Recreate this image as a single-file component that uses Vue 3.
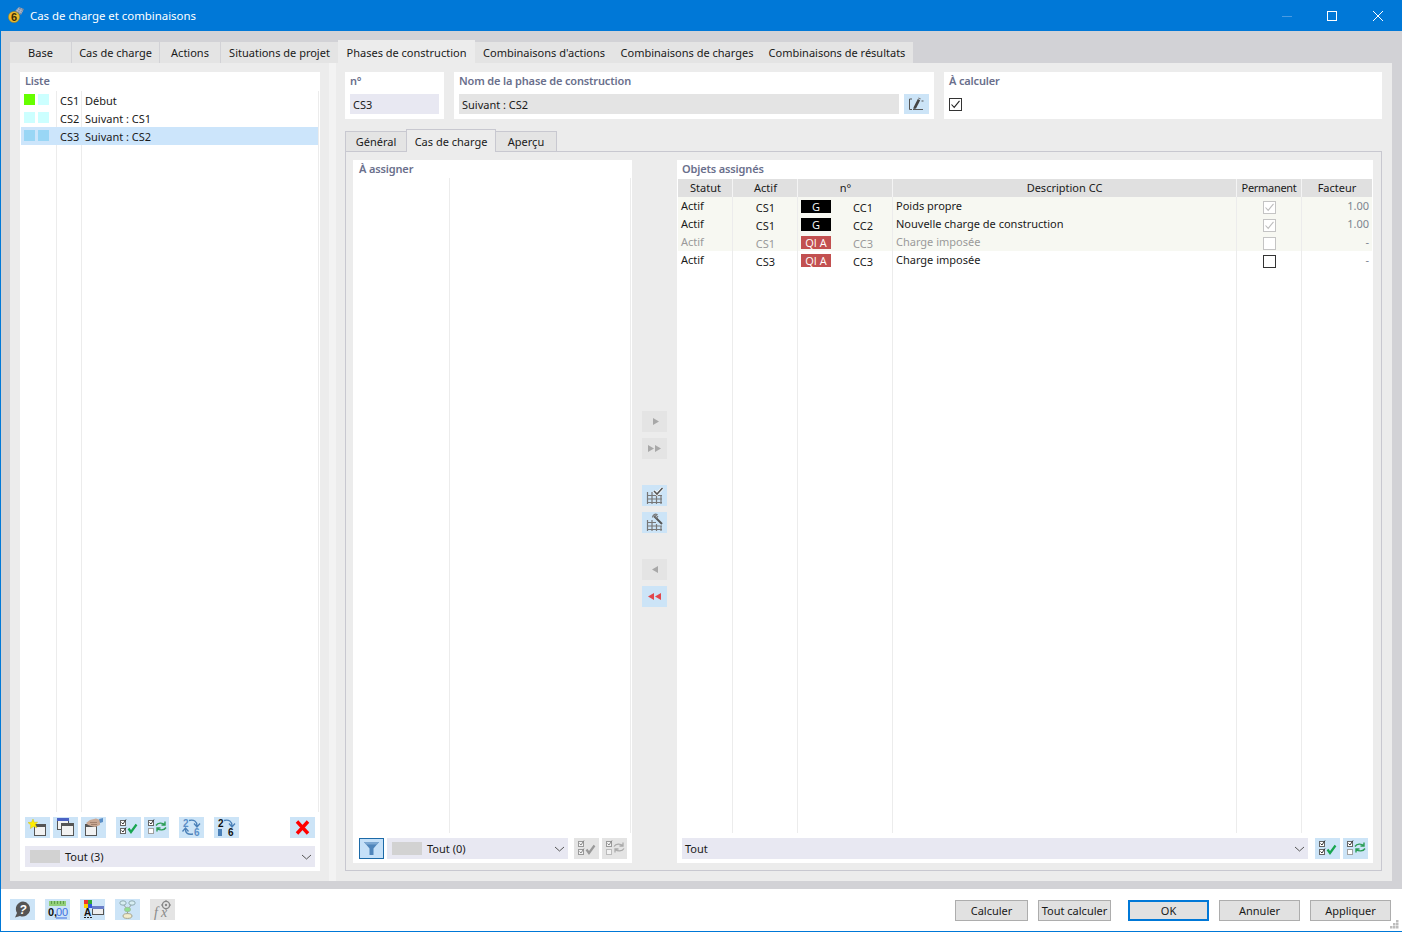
<script setup>
const mainTabs = [
  { label: 'Base', w: 61, gap: 1 },
  { label: 'Cas de charge', w: 87, gap: 1 },
  { label: 'Actions', w: 60, gap: 1 },
  { label: 'Situations de projet', w: 117, gap: 0 },
  { label: 'Phases de construction', w: 137, gap: 0, active: true },
  { label: "Combinaisons d'actions", w: 138, gap: 0 },
  { label: 'Combinaisons de charges', w: 148, gap: 0 },
  { label: 'Combinaisons de résultats', w: 152, gap: 0 }
]
const phases = [
  { no: 'CS1', name: 'Début', a: '#66ff00', b: '#ccffff' },
  { no: 'CS2', name: 'Suivant : CS1', a: '#ccffff', b: '#ccffff' },
  { no: 'CS3', name: 'Suivant : CS2', a: '#99d6f5', b: '#99d6f5', selected: true }
]
const rows = [
  { status: 'Actif', cs: 'CS1', badge: 'G', kind: 'g', cc: 'CC1', desc: 'Poids propre', checked: true, locked: true, factor: '1.00', tint: true },
  { status: 'Actif', cs: 'CS1', badge: 'G', kind: 'g', cc: 'CC2', desc: 'Nouvelle charge de construction', checked: true, locked: true, factor: '1.00', tint: true },
  { status: 'Actif', cs: 'CS1', badge: 'QI A', kind: 'q', cc: 'CC3', desc: 'Charge imposée', locked: true, factor: '-', tint: true, dim: true },
  { status: 'Actif', cs: 'CS3', badge: 'QI A', kind: 'q', cc: 'CC3', desc: 'Charge imposée', factor: '-' }
]
</script>

<template>
  <div class="window">
    <header class="titlebar">
      <svg class="app-icon" width="16" height="18" viewBox="0 0 16 18">
        <path d="M7 5 L11 1 L16 3 L13 9 Z" fill="#7d8aa0"/>
        <path d="M8 4L14 7M9.5 2.8L15 5.4M11 1.5L9 6M13.5 2.4L11.5 7.5" stroke="#c3cbd8" stroke-width="0.6"/>
        <circle cx="6" cy="11" r="5.6" fill="#eab92c" stroke="#9a7a18" stroke-width="0.5"/>
        <text x="6" y="15" text-anchor="middle" font-size="11" font-weight="700" font-family="Liberation Sans" fill="#3a2c05">6</text>
      </svg>
      <span class="title-text">Cas de charge et combinaisons</span>
      <div class="win-controls">
        <svg width="12" height="12" viewBox="0 0 12 12" class="wc-min"><path d="M1 6.5H11" stroke="#4a9be2"/></svg>
        <svg width="12" height="12" viewBox="0 0 12 12" class="wc-max"><rect x="1.5" y="1.5" width="9" height="9" fill="none" stroke="#fff"/></svg>
        <svg width="12" height="12" viewBox="0 0 12 12" class="wc-close"><path d="M1 1L11 11M11 1L1 11" stroke="#fff"/></svg>
      </div>
    </header>

    <main class="main">
      <nav class="tabs">
        <div
          v-for="t in mainTabs"
          :key="t.label"
          class="tab"
          :class="{ active: t.active }"
          :style="{ width: t.w + 'px', marginRight: t.gap + 'px' }"
        >{{ t.label }}</div>
      </nav>

      <div class="panel">
        <section class="left-pane">
          <div class="card list-card">
            <div class="group-label list-label">Liste</div>
            <div class="list">
              <div v-for="p in phases" :key="p.no" class="list-row" :class="{ selected: p.selected }">
                <div class="swatches">
                  <i class="swatch" :style="{ background: p.a }"></i>
                  <i class="swatch" :style="{ background: p.b }"></i>
                </div>
                <div class="l-no">{{ p.no }}</div>
                <div class="l-name">{{ p.name }}</div>
              </div>
            </div>
            <div class="list-tools">
              <button class="ib">
                <svg width="25" height="21" viewBox="0 0 25 21">
                  <rect x="9.5" y="7.5" width="11" height="11" fill="#f2f2f2" stroke="#555"/><rect x="9" y="7" width="12" height="3" fill="#555"/>
                  <path d="M8 2L9.3 5.4 12.6 5 10.4 7.6 12 10.8 8.4 9.6 5.4 11.6 5.8 8 3 5.6 6.6 5.2Z" fill="#ffee00" stroke="#c9b400" stroke-width="0.4"/>
                </svg>
              </button>
              <button class="ib">
                <svg width="25" height="21" viewBox="0 0 25 21">
                  <rect x="4.5" y="1.5" width="11" height="11" fill="#f2f2f2" stroke="#555"/><rect x="4" y="1" width="12" height="3" fill="#4a62c4"/>
                  <rect x="8.5" y="6.5" width="12" height="12" fill="#f2f2f2" stroke="#555"/><rect x="8" y="6" width="13" height="3" fill="#555"/>
                </svg>
              </button>
              <button class="ib">
                <svg width="25" height="21" viewBox="0 0 25 21">
                  <rect x="4.5" y="7.5" width="11" height="11" fill="#f2f2f2" stroke="#555"/><rect x="4" y="7" width="12" height="3" fill="#555"/>
                  <path d="M5 6L9 3 15 1.5 19 3 19 8 14 10 10 9 7 8Z" fill="#c9a893"/>
                  <path d="M18 2L22 1 22 5 19 6Z" fill="#5b8fc7"/>
                  <path d="M9 5.5H16M10 7.5H16" stroke="#8f6f5c" stroke-width="0.7"/>
                </svg>
              </button>
              <button class="ib ml-10">
                <svg width="25" height="21" viewBox="0 0 25 21">
                  <rect x="4.5" y="3.5" width="5" height="5" fill="#fff" stroke="#666"/><path d="M5.5 5.5L7 7 10 2.5" fill="none" stroke="#333"/>
                  <rect x="4.5" y="11.5" width="5" height="5" fill="#fff" stroke="#666"/><path d="M5.5 13.5L7 15 10 10.5" fill="none" stroke="#333"/>
                  <path d="M12.5 11.5L15 15 20.5 7.5" fill="none" stroke="#17a650" stroke-width="2.2"/>
                </svg>
              </button>
              <button class="ib">
                <svg width="25" height="21" viewBox="0 0 25 21">
                  <rect x="4.5" y="3.5" width="5" height="5" fill="#fff" stroke="#666"/><path d="M5.5 5.5L7 7 10 2.5" fill="none" stroke="#333"/>
                  <rect x="4.5" y="11.5" width="5" height="5" fill="#fff" stroke="#a0a0a0"/>
                  <path d="M12 8.5C14 5.5 18 5.5 21 7.5M21 4.5V8H17.5" fill="none" stroke="#2a9d55" stroke-width="1.4"/>
                  <path d="M22 10.5C20 13.5 16 13.5 13 11.5M13 14.5V11H16.5" fill="none" stroke="#2a9d55" stroke-width="1.4"/>
                </svg>
              </button>
              <button class="ib ml-10">
                <svg width="25" height="21" viewBox="0 0 25 21">
                  <text x="4" y="10" class="num-blue">2</text><text x="15" y="19" class="num-blue">6</text>
                  <path d="M10 3.5C15 2.5 18 4 18 9M15 6.5L18 10 21 6.5" fill="none" stroke="#4a80b8" stroke-width="1.3"/>
                  <path d="M14 17C9 18 6 16 6.5 12M3.5 14.5L6.5 11 9.5 14.5" fill="none" stroke="#4a80b8" stroke-width="1.3"/>
                </svg>
              </button>
              <button class="ib ml-10">
                <svg width="25" height="21" viewBox="0 0 25 21">
                  <text x="4" y="10" class="num-black">2</text><text x="14" y="19" class="num-black">6</text>
                  <rect x="4" y="12" width="4" height="7" fill="#4a80b8"/>
                  <path d="M10 3.5C15 2.5 18 4 18 9M15 6.5L18 10 21 6.5" fill="none" stroke="#4a80b8" stroke-width="1.3"/>
                </svg>
              </button>
              <button class="ib push-right">
                <svg width="25" height="21" viewBox="0 0 25 21"><path d="M7 4.5L18 16.5M18 4.5L7 16.5" stroke="#f00" stroke-width="3.4"/></svg>
              </button>
            </div>
            <div class="combo list-combo">
              <i class="combo-swatch"></i><span>Tout (3)</span>
              <svg class="chev" width="11" height="6" viewBox="0 0 11 6"><path d="M1 1L5.5 5 10 1" fill="none" stroke="#555"/></svg>
            </div>
          </div>
        </section>

        <div class="splitter"></div>

        <section class="right-pane">
          <div class="head-row">
            <div class="card head-card no-card">
              <div class="group-label">n°</div>
              <div class="field field-blue">CS3</div>
            </div>
            <div class="card head-card name-card">
              <div class="group-label">Nom de la phase de construction</div>
              <div class="name-line">
                <div class="field field-grey">Suivant : CS2</div>
                <button class="ib ib-edit">
                  <svg width="25" height="20" viewBox="0 0 25 20">
                    <path d="M8 5H5.5V15.5H8M9 15.5H19" fill="none" stroke="#555"/>
                    <path d="M9.5 13.5L13.8 5 16.2 6.2 12 14.6 9.5 15Z" fill="#444"/>
                    <path d="M14.4 3.4L16.8 4.6 16.4 5.4 14 4.2Z" fill="#777"/>
                    <path d="M17.5 7H19.5" stroke="#555"/>
                  </svg>
                </button>
              </div>
            </div>
            <div class="card head-card calc-card">
              <div class="group-label">À calculer</div>
              <span class="check check-dark checked-icon">
                <svg width="11" height="11" viewBox="0 0 11 11"><path d="M1.5 5.5L4.2 8.4 9.5 1.8" fill="none" stroke="#222" stroke-width="1.1"/></svg>
              </span>
            </div>
          </div>

          <div class="subtabs">
            <div class="subtab st-general">Général</div>
            <div class="subtab active st-load">Cas de charge</div>
            <div class="subtab st-preview">Aperçu</div>
          </div>

          <div class="subpanel">
            <div class="card assign-card">
              <div class="group-label assign-label">À assigner</div>
              <div class="assign-list"></div>
              <div class="assign-tools">
                <button class="ib ib-filter">
                  <svg width="23" height="19" viewBox="0 0 23 19"><path d="M4 3H19L13.5 9.5V16H9.5V9.5Z" fill="#4f85bb"/><path d="M4 3H19L17 5.4H6Z" fill="#7ba7d2"/></svg>
                </button>
                <div class="combo assign-combo">
                  <i class="combo-swatch"></i><span>Tout (0)</span>
                  <svg class="chev" width="11" height="6" viewBox="0 0 11 6"><path d="M1 1L5.5 5 10 1" fill="none" stroke="#555"/></svg>
                </div>
                <button class="ib ib-off ml-6">
                  <svg width="25" height="21" viewBox="0 0 25 21">
                    <rect x="4.5" y="3.5" width="5" height="5" fill="#f2f2f2" stroke="#999"/><path d="M5.5 5.5L7 7 10 2.5" fill="none" stroke="#888"/>
                    <rect x="4.5" y="11.5" width="5" height="5" fill="#f2f2f2" stroke="#999"/><path d="M5.5 13.5L7 15 10 10.5" fill="none" stroke="#888"/>
                    <path d="M12.5 11.5L15 15 20.5 7.5" fill="none" stroke="#999" stroke-width="2.2"/>
                  </svg>
                </button>
                <button class="ib ib-off">
                  <svg width="25" height="21" viewBox="0 0 25 21">
                    <rect x="4.5" y="3.5" width="5" height="5" fill="#f2f2f2" stroke="#999"/><path d="M5.5 5.5L7 7 10 2.5" fill="none" stroke="#888"/>
                    <rect x="4.5" y="11.5" width="5" height="5" fill="#f2f2f2" stroke="#bbb"/>
                    <path d="M12 8.5C14 5.5 18 5.5 21 7.5M21 4.5V8H17.5" fill="none" stroke="#aaa" stroke-width="1.3"/>
                    <path d="M22 10.5C20 13.5 16 13.5 13 11.5M13 14.5V11H16.5" fill="none" stroke="#aaa" stroke-width="1.3"/>
                  </svg>
                </button>
              </div>
            </div>

            <div class="transfer">
              <button class="ib ib-off">
                <svg width="25" height="21" viewBox="0 0 25 21"><path d="M11 7L17 10.5 11 14Z" fill="#a8a8a8"/></svg>
              </button>
              <button class="ib ib-off">
                <svg width="25" height="21" viewBox="0 0 25 21"><path d="M6 7L12 10.5 6 14ZM13 7L19 10.5 13 14Z" fill="#a8a8a8"/></svg>
              </button>
              <button class="ib group-gap">
                <svg width="25" height="21" viewBox="0 0 25 21">
                  <path d="M5.5 7V19M10 7V19M14.5 10V19M19 10V19M5 10.5H20M5 14H20M5 17.5H20" fill="none" stroke="#777" stroke-width="1.2"/>
                  <path d="M12 6L15 9 20.5 3" fill="none" stroke="#fff" stroke-width="3"/>
                  <path d="M12 6L15 9 20.5 3" fill="none" stroke="#555" stroke-width="1.6"/>
                </svg>
              </button>
              <button class="ib">
                <svg width="25" height="21" viewBox="0 0 25 21">
                  <path d="M5.5 8V19M10 8V19M14.5 12V19M19 14V19M5 10.5H14M5 14H20M5 17.5H20" fill="none" stroke="#777" stroke-width="1.2"/>
                  <path d="M12 4L20 12" fill="none" stroke="#555" stroke-width="2"/><path d="M10.5 5.5C10.5 3 13 1.5 15 2.5L13 4.5 14.5 6 16 4" fill="none" stroke="#777" stroke-width="1.2"/>
                </svg>
              </button>
              <button class="ib ib-off group-gap">
                <svg width="25" height="21" viewBox="0 0 25 21"><path d="M16 7L10 10.5 16 14Z" fill="#a8a8a8"/></svg>
              </button>
              <button class="ib">
                <svg width="25" height="21" viewBox="0 0 25 21"><path d="M12 7L6 10.5 12 14ZM19 7L13 10.5 19 14Z" fill="#e2474d"/></svg>
              </button>
            </div>

            <div class="card objects-card">
              <div class="group-label objects-label">Objets assignés</div>
              <div class="table">
                <div class="t-row t-head">
                  <div>Statut</div><div>Actif</div><div>n°</div><div>Description CC</div><div class="h-perm">Permanent</div><div>Facteur</div>
                </div>
                <div
                  v-for="(r, i) in rows"
                  :key="i"
                  class="t-row t-body"
                  :class="{ tint: r.tint, dim: r.dim }"
                >
                  <div class="c-status">{{ r.status }}</div>
                  <div class="c-cs">{{ r.cs }}</div>
                  <div class="c-no">
                    <span class="badge" :class="r.kind">{{ r.badge }}</span>
                    <span class="cc">{{ r.cc }}</span>
                  </div>
                  <div class="c-desc">{{ r.desc }}</div>
                  <div class="c-perm">
                    <span class="check" :class="r.locked ? 'check-grey' : 'check-dark'">
                      <svg v-if="r.checked" width="11" height="11" viewBox="0 0 11 11"><path d="M1.5 5.5L4.2 8.4 9.5 1.8" fill="none" stroke="#bdbdbd" stroke-width="1.1"/></svg>
                    </span>
                  </div>
                  <div class="c-factor">{{ r.factor }}</div>
                </div>
              </div>
              <div class="objects-tools">
                <div class="combo objects-combo">
                  <span>Tout</span>
                  <svg class="chev" width="11" height="6" viewBox="0 0 11 6"><path d="M1 1L5.5 5 10 1" fill="none" stroke="#555"/></svg>
                </div>
                <button class="ib ml-7">
                  <svg width="25" height="21" viewBox="0 0 25 21">
                    <rect x="4.5" y="3.5" width="5" height="5" fill="#fff" stroke="#666"/><path d="M5.5 5.5L7 7 10 2.5" fill="none" stroke="#333"/>
                    <rect x="4.5" y="11.5" width="5" height="5" fill="#fff" stroke="#666"/><path d="M5.5 13.5L7 15 10 10.5" fill="none" stroke="#333"/>
                    <path d="M12.5 11.5L15 15 20.5 7.5" fill="none" stroke="#17a650" stroke-width="2.2"/>
                  </svg>
                </button>
                <button class="ib">
                  <svg width="25" height="21" viewBox="0 0 25 21">
                    <rect x="4.5" y="3.5" width="5" height="5" fill="#fff" stroke="#666"/><path d="M5.5 5.5L7 7 10 2.5" fill="none" stroke="#333"/>
                    <rect x="4.5" y="11.5" width="5" height="5" fill="#fff" stroke="#a0a0a0"/>
                    <path d="M12 8.5C14 5.5 18 5.5 21 7.5M21 4.5V8H17.5" fill="none" stroke="#2a9d55" stroke-width="1.4"/>
                    <path d="M22 10.5C20 13.5 16 13.5 13 11.5M13 14.5V11H16.5" fill="none" stroke="#2a9d55" stroke-width="1.4"/>
                  </svg>
                </button>
              </div>
            </div>
          </div>
        </section>
      </div>
    </main>

    <footer class="footer">
      <div class="foot-icons">
        <button class="ib">
          <svg width="25" height="21" viewBox="0 0 25 21">
            <path d="M13 2.5A7.5 7.5 0 1 1 10 17L5 18.5 7 14A7.5 7.5 0 0 1 13 2.5Z" fill="#555"/>
            <text x="13" y="14.5" text-anchor="middle" class="q-mark">?</text>
          </svg>
        </button>
        <button class="ib">
          <svg width="25" height="21" viewBox="0 0 25 21">
            <rect x="4" y="2" width="17" height="5" fill="#92cf7a"/>
            <path d="M6.5 2V5M9.5 2V5M12.5 2V5M15.5 2V5M18.5 2V5" stroke="#5f9e4c"/>
            <text x="3" y="17" class="zero-black">0,</text><text x="11" y="17" class="zero-blue">00</text>
            <path d="M11 19H22" stroke="#3f6fe0"/>
          </svg>
        </button>
        <button class="ib">
          <svg width="25" height="21" viewBox="0 0 25 21">
            <rect x="4" y="1" width="4" height="4" fill="#e33"/><rect x="8" y="1" width="4" height="4" fill="#3a3"/>
            <rect x="4" y="5" width="4" height="4" fill="#fc0"/><rect x="8" y="5" width="4" height="4" fill="#35d"/>
            <text x="4" y="17" class="a-mark">A</text>
            <path d="M4 18.5H6M7 18.5H9M10 18.5H12" stroke="#222"/>
            <rect x="12.5" y="7.5" width="11" height="8" fill="#eee" stroke="#555"/><rect x="12" y="7" width="12" height="3" fill="#6a7ec8"/>
          </svg>
        </button>
        <button class="ib">
          <svg width="25" height="21" viewBox="0 0 25 21">
            <path d="M8 5L12 10M17 5L13 10M12.5 12V15" stroke="#999"/>
            <ellipse cx="8" cy="4" rx="3.2" ry="2.2" fill="#d8eef2" stroke="#8fabb2"/>
            <ellipse cx="17" cy="4" rx="3.2" ry="2.2" fill="#d8eef2" stroke="#8fabb2"/>
            <ellipse cx="12.5" cy="10.5" rx="3" ry="2.2" fill="#8fe08f" stroke="#a0c0a0"/>
            <ellipse cx="12.5" cy="17" rx="4.5" ry="2.4" fill="#f2eccb" stroke="#a5a590"/>
          </svg>
        </button>
        <button class="ib ib-off">
          <svg width="25" height="21" viewBox="0 0 25 21">
            <text x="4" y="18" class="fx">f</text><text x="11" y="18" class="fx">x</text>
            <circle cx="16" cy="6" r="3.6" fill="none" stroke="#888" stroke-width="1.4"/><circle cx="16" cy="6" r="1.2" fill="#888"/>
            <path d="M16 1V2.5M16 9.5V11M11 6H12.5M19.5 6H21" stroke="#888"/>
          </svg>
        </button>
      </div>
      <div class="foot-buttons">
        <button class="btn">Calculer</button>
        <button class="btn btn-calc-all">Tout calculer</button>
        <button class="btn btn-wide btn-ok">OK</button>
        <button class="btn btn-wide">Annuler</button>
        <button class="btn btn-wide">Appliquer</button>
      </div>
      <svg class="grip" width="9" height="9" viewBox="0 0 9 9">
        <path d="M6 0h2.5v2.5H6zM3 3h2.5v2.5H3zM6 3h2.5v2.5H6zM0 6h2.5v2.5H0zM3 6h2.5v2.5H3zM6 6h2.5v2.5H6z" fill="#bcbcbc"/>
      </svg>
    </footer>
  </div>
</template>

<style>
html, body { margin: 0; padding: 0; background: #fff; }
</style>

<style scoped>
.window {
  width: 1402px; height: 932px; box-sizing: border-box; display: flex; flex-direction: column;
  border-left: 1px solid #0078d7; border-bottom: 1px solid #0078d7; overflow: hidden;
  font-family: "Noto Sans", "Open Sans", sans-serif; font-size: 11px; color: #1a1a1a; background: #fff;
}
button { border: 0; padding: 0; margin: 0; font: inherit; color: inherit; }
svg { display: block; }

.titlebar { height: 31px; flex: none; background: #0078d7; display: flex; align-items: center; padding-left: 8px; color: #fff; margin-left: -1px; }
.app-icon { margin-right: 6px; margin-top: -1px; }
.title-text { font-size: 11.4px; }
.win-controls { margin-left: auto; display: flex; align-items: center; margin-right: 18px; }
.wc-max { margin-left: 33px; } .wc-close { margin-left: 34px; }

.main { flex: 1; min-height: 0; background: #d2d2d6; padding: 9px 10px 8px 9px; display: flex; flex-direction: column; }
.tabs { display: flex; align-items: flex-end; height: 23px; flex: none; }
.tab { height: 21px; box-sizing: border-box; background: #e4e4e4; display: flex; align-items: center; justify-content: center; white-space: nowrap; }
.tab.active { height: 23px; background: #ececec; padding-top: 2px; }

.panel { flex: 1; min-height: 0; display: flex; background: #ececec; }
.left-pane { width: 319px; flex: none; box-sizing: border-box; padding: 9px 9px 10px 10px; display: flex; }
.splitter { width: 7px; flex: none; background: #f3f3f3; }
.right-pane { flex: 1; min-width: 0; box-sizing: border-box; padding: 9px 10px 10px 9px; display: flex; flex-direction: column; }

.card { background: #fff; box-sizing: border-box; }
.group-label { color: #6a6f8c; font-weight: 600; line-height: 18px; height: 18px; white-space: nowrap; letter-spacing: -0.15px; }

.list-card { width: 300px; display: flex; flex-direction: column; }
.list-label { padding-left: 5px; margin-bottom: 1px; }
.list {
  margin-left: 1px; width: 298px; flex: 1; min-height: 0;
  background:
    linear-gradient(#ececec, #ececec) 35px 0 / 1px 100% no-repeat,
    linear-gradient(#ececec, #ececec) 60px 0 / 1px 100% no-repeat,
    linear-gradient(#ececec, #ececec) 297px 0 / 1px 100% no-repeat;
}
.list-row { display: grid; grid-template-columns: 36px 25px 1fr; height: 18px; align-items: center; }
.list-row.selected { background: #cce5fb; width: 297px; height: 18px; }
.swatches { display: flex; gap: 3px; padding: 3px 0 0 3px; align-self: start; }
.swatch { width: 11px; height: 11px; display: block; }
.l-no { padding-left: 3px; }
.l-name { padding-left: 3px; white-space: nowrap; }
.list-tools { display: flex; padding: 0 5px; margin-top: 5px; gap: 3px; flex: none; }
.list-combo { margin: 8px 5px 4px; flex: none; }

.ib { width: 25px; height: 21px; flex: none; background: #cce4f7; display: block; }
.ib-off { background: #e4e4e4; }
.ml-10 { margin-left: 7px; }
.ml-6 { margin-left: 3px; }
.ml-7 { margin-left: 4px; }
.push-right { margin-left: auto; }
.combo { height: 21px; box-sizing: border-box; background: #e8e8f2; display: flex; align-items: center; padding-left: 5px; }
.combo-swatch { width: 30px; height: 13px; background: #d2d2d2; display: block; margin-right: 5px; }
.chev { margin-left: auto; margin-right: 3px; }

.head-row { display: flex; gap: 10px; flex: none; height: 47px; }
.head-card { padding: 0 5px; }
.no-card { width: 99px; }
.name-card { width: 480px; }
.calc-card { flex: 1; }
.field { height: 20px; margin-top: 4px; line-height: 21px; padding-left: 3px; box-sizing: border-box; }
.field-blue { background: #e8e8f2; }
.field-grey { background: #e4e4e4; flex: 1; }
.name-line { display: flex; gap: 5px; }
.ib-edit { height: 20px; margin-top: 4px; }
.check { width: 13px; height: 13px; box-sizing: border-box; display: flex; align-items: center; justify-content: center; background: #fff; }
.check-dark { border: 1px solid #333; }
.check-grey { border: 1px solid #c4c4c4; }
.checked-icon { margin: 8px 0 0 0; }

.subtabs { display: flex; align-items: flex-end; height: 22px; margin-top: 10px; flex: none; position: relative; z-index: 1; }
.subtab { height: 20px; box-sizing: border-box; background: #e4e4e4; border: 1px solid #c8c8d0; border-bottom: 0; display: flex; align-items: center; justify-content: center; white-space: nowrap; }
.st-general { width: 61px; border-right: 0; }
.st-load { width: 90px; }
.st-preview { width: 61px; border-left: 0; }
.subtab.active { height: 23px; margin-bottom: -1px; background: #ececec; padding-top: 1px; }

.subpanel { flex: 1; min-height: 0; border: 1px solid #c8c8d0; box-sizing: border-box; padding: 8px 8px 7px 7px; display: flex; background: #ececec; }
.assign-card { width: 279px; flex: none; display: flex; flex-direction: column; }
.assign-label { padding-left: 6px; }
.assign-list {
  flex: 1; min-height: 0;
  background:
    linear-gradient(#ececec, #ececec) 96px 0 / 1px 100% no-repeat,
    linear-gradient(#ececec, #ececec) 277px 0 / 1px 100% no-repeat;
}
.assign-tools { display: flex; flex: none; padding: 5px 5px 4px 6px; gap: 3px; }
.ib-filter { box-sizing: border-box; border: 1px solid #1c6aa8; background: #c5e0f8; }
.assign-combo { width: 181px; }
.transfer { width: 45px; flex: none; box-sizing: border-box; padding: 251px 10px 0; display: flex; flex-direction: column; gap: 6px; }
.group-gap { margin-top: 20px; }

.objects-card { flex: 1; min-width: 0; display: flex; flex-direction: column; }
.objects-label { padding-left: 5px; height: 19px; line-height: 18px; }
.table {
  margin-left: 1px; width: 694px; flex: 1; min-height: 0;
  background:
    linear-gradient(#ececec, #ececec) 54px 0 / 1px 100% no-repeat,
    linear-gradient(#ececec, #ececec) 119px 0 / 1px 100% no-repeat,
    linear-gradient(#ececec, #ececec) 214px 0 / 1px 100% no-repeat,
    linear-gradient(#ececec, #ececec) 558px 0 / 1px 100% no-repeat,
    linear-gradient(#ececec, #ececec) 623px 0 / 1px 100% no-repeat;
}
.t-row { display: grid; grid-template-columns: 55px 65px 95px 344px 65px 70px; height: 18px; }
.t-row > div { box-sizing: border-box; border-right: 1px solid #ececec; min-width: 0; }
.t-row > div:last-child { border-right: 0; }
.t-head { background: #e0e0e0; }
.t-head > div { border-right: 1px solid #f4f4f4; text-align: center; line-height: 18px; white-space: nowrap; }
.t-head > div:nth-child(-n+3) { padding-left: 1px; }
.t-head > .h-perm { letter-spacing: -0.3px; }
.t-body { line-height: 18px; }
.t-body.tint { background: #f7f8f2; }
.t-body.dim { color: #9a9a9a; }
.c-status { padding-left: 3px; }
.c-cs { text-align: center; padding: 2px 0 0 1px; }
.c-no { display: flex; align-items: flex-start; padding: 3px 0 0 3px; position: relative; }
.badge { width: 30px; height: 13px; line-height: 13px; text-align: center; color: #fff; display: block; font-family: "Open Sans", sans-serif; }
.badge.g { background: #000; }
.badge.q { background: #c25050; }
.cc { margin-left: 22px; margin-top: -1px; line-height: 18px; }
.c-desc { padding-left: 3px; white-space: nowrap; }
.c-perm { display: flex; justify-content: center; padding-top: 4px; }
.c-factor { text-align: right; padding-right: 3px; color: #7d8590; }
.objects-tools { display: flex; flex: none; padding: 5px 5px 4px 5px; gap: 3px; }
.objects-combo { flex: 1; min-width: 0; padding-left: 3px; }

.footer { height: 42px; flex: none; background: #fff; display: flex; align-items: flex-start; padding: 10px 0 0 9px; position: relative; box-sizing: border-box; }
.foot-icons { display: flex; gap: 10px; }
.foot-buttons { margin-left: auto; display: flex; margin-right: 11px; margin-top: 1px; }
.btn { width: 73px; height: 21px; box-sizing: border-box; background: #e1e1e1; border: 1px solid #adadad; text-align: center; white-space: nowrap; margin-left: 10px; }
.btn-calc-all { margin-right: 7px; }
.btn-wide { width: 81px; }
.btn-ok { border: 2px solid #0078d7; }
.grip { position: absolute; right: 3px; bottom: 2px; }

.num-blue { font: 700 10px "Liberation Sans", sans-serif; fill: #5b8fc7; }
.num-black { font: 700 10px "Liberation Sans", sans-serif; fill: #111; }
.q-mark { font: italic 700 12px "Liberation Sans", sans-serif; fill: #fff; }
.zero-black { font: 700 11px "Liberation Sans", sans-serif; fill: #111; }
.zero-blue { font: 400 11px "Liberation Sans", sans-serif; fill: #3f6fe0; }
.a-mark { font: 700 10px "Liberation Sans", sans-serif; fill: #111; }
.fx { font: italic 400 14px "Liberation Serif", serif; fill: #888; }
</style>
